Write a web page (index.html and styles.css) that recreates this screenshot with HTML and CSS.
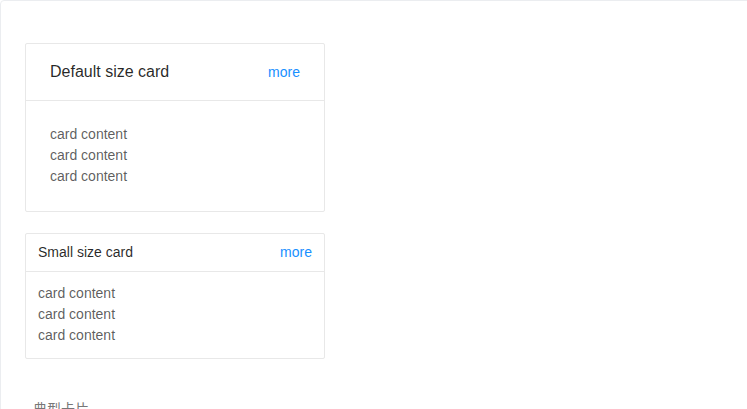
FILE: index.html
```html
<!DOCTYPE html>
<html lang="zh">
<head>
<meta charset="utf-8">
<link rel="stylesheet" href="styles.css">
</head>
<body>
<section class="code-box">
  <div class="demo">
    <div class="card">
      <div class="card-head">
        <div class="card-title">Default size card</div>
        <a class="card-extra" href="#">more</a>
      </div>
      <div class="card-body">
        <p>card content</p>
        <p>card content</p>
        <p>card content</p>
      </div>
    </div>
    <div class="spacer"></div>
    <div class="card card-small">
      <div class="card-head">
        <div class="card-title">Small size card</div>
        <a class="card-extra" href="#">more</a>
      </div>
      <div class="card-body">
        <p>card content</p>
        <p>card content</p>
        <p>card content</p>
      </div>
    </div>
  </div>
  <div class="meta">
    <div class="meta-title">典型卡片</div>
  </div>
</section>
</body>
</html>
```
FILE: styles.css
```css
html, body {
  margin: 0;
  padding: 0;
  background: #fff;
  overflow: hidden;
}
body {
  font-family: "Liberation Sans", Arial, "Noto Sans CJK SC", sans-serif;
  font-size: 14px;
  line-height: 1.5;
  color: rgba(0, 0, 0, 0.65);
  height: 409px;
}
.code-box {
  width: 800px;
  border: 1px solid #ebedf0;
  border-radius: 4px;
  box-sizing: border-box;
}
.demo {
  padding: 42px 24px 50px;
  border-bottom: 1px solid #ebedf0;
}
.spacer {
  height: 21px;
}
.card {
  width: 300px;
  box-sizing: border-box;
  border: 1px solid #e8e8e8;
  border-radius: 2px;
  background: #fff;
}
.card-head {
  display: flex;
  align-items: center;
  justify-content: space-between;
  padding: 0 24px;
  border-bottom: 1px solid #e8e8e8;
  min-height: 48px;
  margin-bottom: -1px;
}
.card-title {
  padding: 16px 0;
  font-size: 16px;
  line-height: 24px;
  color: rgba(0, 0, 0, 0.85);
  font-weight: 500;
}
.card-extra {
  font-size: 14px;
  line-height: 21px;
  color: #1890ff;
  text-decoration: none;
}
.card-body {
  padding: 24px;
}
.card-body p {
  margin: 0;
  line-height: 21px;
}
.card-small .card-head {
  min-height: 36px;
  padding: 0 12px;
}
.card-small .card-title {
  padding: 8px 0;
  font-size: 14px;
  line-height: 21px;
}
.card-small .card-body {
  padding: 12px;
}
.meta {
  position: relative;
  height: 20px;
}
.meta-title {
  position: absolute;
  top: -14px;
  left: 24px;
  padding: 1px 8px;
  background: #fff;
  color: #777;
  font-family: "Noto Sans CJK SC", sans-serif;
  font-size: 14px;
  line-height: 22px;
}
```
